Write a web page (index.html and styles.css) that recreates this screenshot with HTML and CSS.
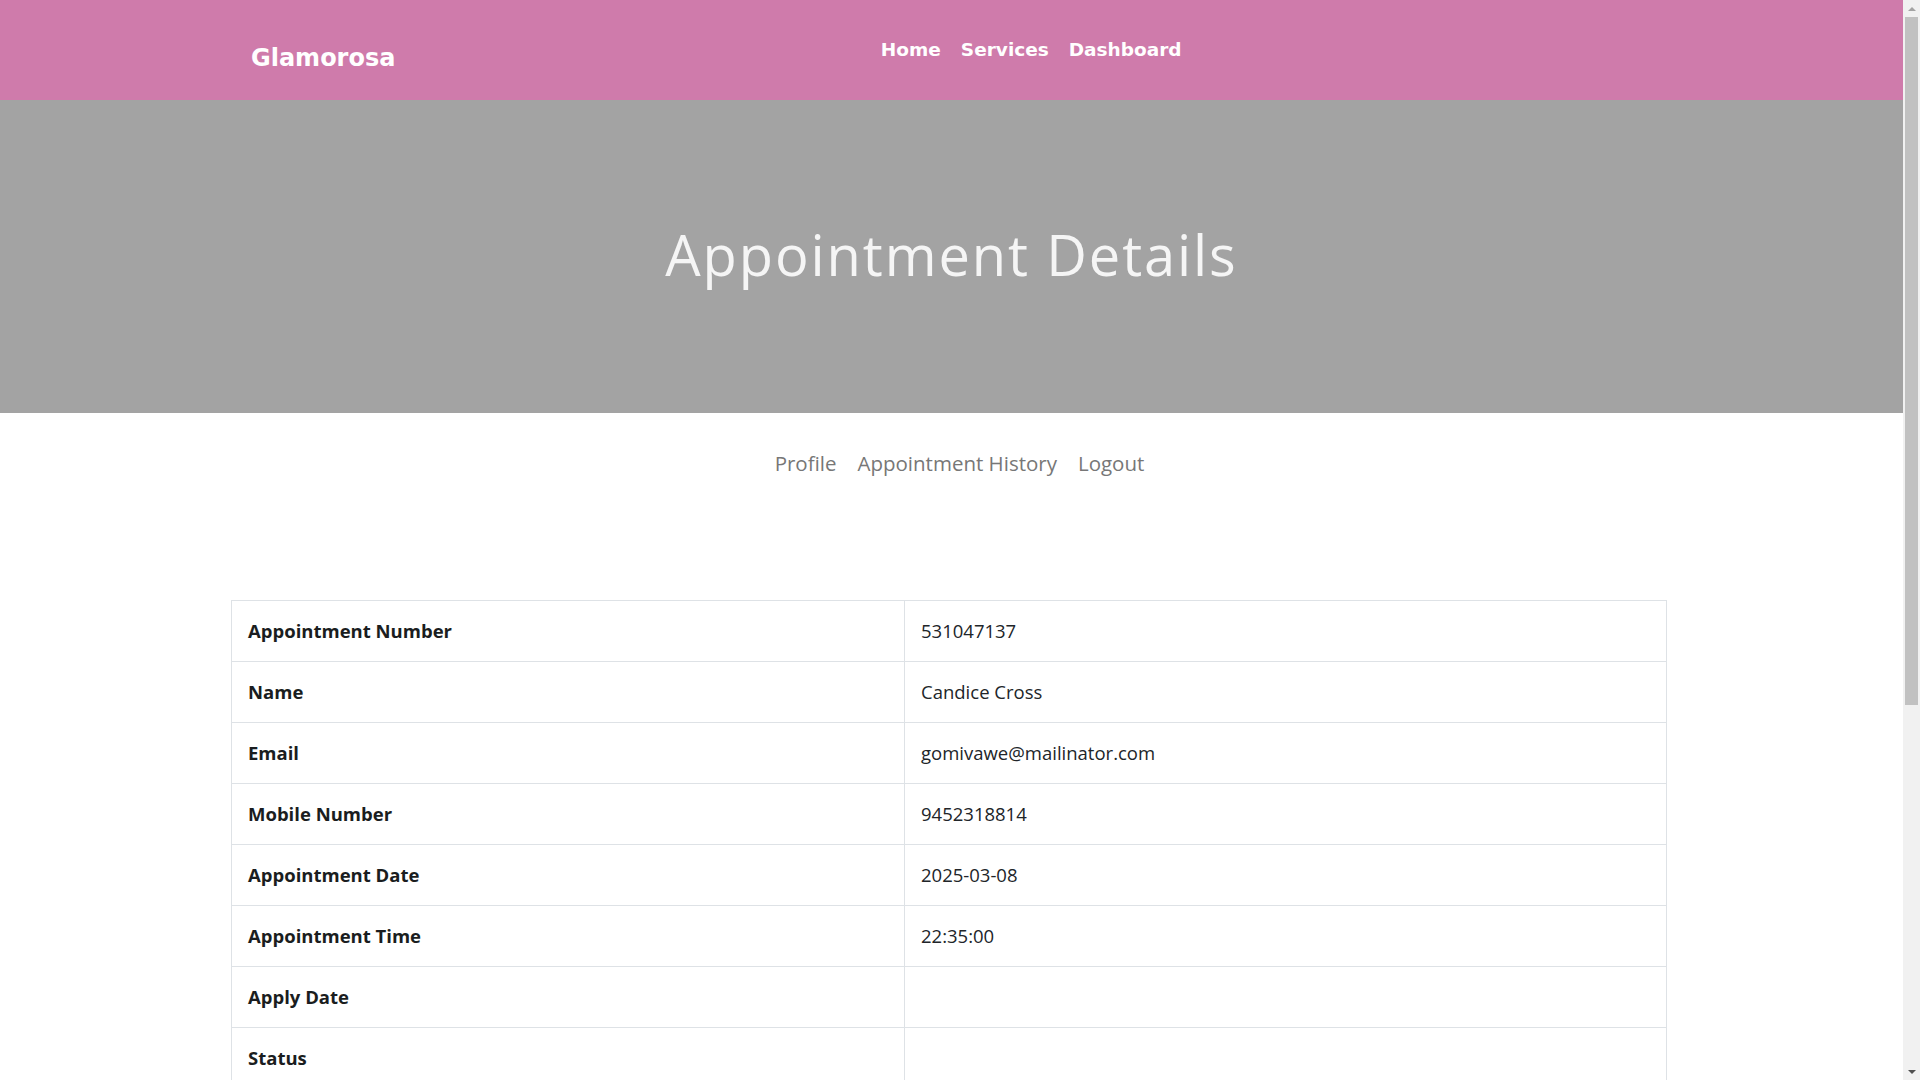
FILE: index.html
```html
<!DOCTYPE html>
<html lang="en">
<head>
<meta charset="utf-8">
<title>Glamorosa - Appointment Details</title>
<link rel="stylesheet" href="styles.css">
</head>
<body>
<header class="site-header">
  <div class="header-inner">
    <a class="brand" href="#">Glamorosa</a>
    <nav class="main-nav">
      <a href="#">Home</a>
      <a href="#">Services</a>
      <a href="#">Dashboard</a>
    </nav>
  </div>
</header>

<section class="hero">
  <h1 class="hero-title">Appointment Details</h1>
</section>

<nav class="sub-nav">
  <a href="#">Profile</a>
  <a href="#">Appointment History</a>
  <a href="#">Logout</a>
</nav>

<main class="content">
  <table class="details">
    <colgroup>
      <col class="col-label">
      <col class="col-value">
    </colgroup>
    <tbody>
      <tr><th>Appointment Number</th><td>531047137</td></tr>
      <tr><th>Name</th><td>Candice Cross</td></tr>
      <tr><th>Email</th><td>gomivawe@mailinator.com</td></tr>
      <tr><th>Mobile Number</th><td>9452318814</td></tr>
      <tr><th>Appointment Date</th><td>2025-03-08</td></tr>
      <tr><th>Appointment Time</th><td>22:35:00</td></tr>
      <tr><th>Apply Date</th><td></td></tr>
      <tr><th>Status</th><td></td></tr>
      <tr><th>Admin Remark</th><td></td></tr>
    </tbody>
  </table>
</main>

<footer class="site-footer">
  <p>Glamorosa Beauty Parlour</p>
</footer>

<div class="scrollbar" aria-hidden="true">
  <div class="sb-arrow sb-up"></div>
  <div class="sb-track">
    <div class="sb-thumb"></div>
  </div>
  <div class="sb-arrow sb-down"></div>
</div>
</body>
</html>
```

FILE: styles.css
```css
* { box-sizing: border-box; }

html, body {
  margin: 0;
  padding: 0;
}

body {
  font-family: "Open Sans", "Noto Sans", sans-serif;
  color: #212529;
  background: #ffffff;
  padding-right: 17px;
}

a { text-decoration: none; }

/* Header */
.site-header {
  background: #cf7bab;
  height: 100px;
  padding-right: 5px;
}

.header-inner {
  width: 1436px;
  margin: 0 auto;
  height: 100px;
  padding: 0 0 0 20px;
  display: flex;
  align-items: flex-start;
}

.brand {
  font-family: "DejaVu Sans", sans-serif;
  font-weight: 700;
  font-size: 24px;
  line-height: 24px;
  color: #ffffff;
  margin-top: 46px;
}

.main-nav {
  margin: 41px auto 0 auto;
  display: flex;
}

.main-nav a {
  font-family: "DejaVu Sans", sans-serif;
  font-weight: 700;
  font-size: 18.5px;
  line-height: 18.5px;
  color: #ffffff;
  padding: 0 10px;
}

/* Hero */
.hero {
  background: #a3a3a3;
  height: 313px;
  display: flex;
  align-items: center;
  justify-content: center;
  padding-bottom: 6px;
}

.hero-title {
  margin: 0;
  font-family: "Open Sans", sans-serif;
  font-weight: 400;
  font-size: 56px;
  line-height: 1;
  letter-spacing: 1.9px;
  color: #f5f5f5;
}

/* Sub navigation */
.sub-nav {
  display: flex;
  justify-content: center;
  gap: 21px;
  padding: 36px 0 0 16px;
  height: 187px;
}

.sub-nav a {
  font-family: "Open Sans", sans-serif;
  font-size: 20.5px;
  line-height: 28px;
  color: #777777;
  height: 28px;
}

/* Table */
.content {
  padding: 0 5px 430px 0;
}

.details {
  width: 1436px;
  margin: 0 auto;
  border-collapse: collapse;
  table-layout: fixed;
  font-size: 18.5px;
  line-height: 28px;
}

.col-label { width: 673px; }

.details th,
.details td {
  border: 1px solid #dee2e6;
  padding: 16px 16px;
  text-align: left;
  vertical-align: top;
}

.details th {
  font-weight: 700;
  color: #1a1d20;
}

.details td {
  font-weight: 400;
  color: #212529;
}

.site-footer {
  background: #cf7bab;
  color: #ffffff;
  text-align: center;
  padding: 20px 0;
}

.site-footer p { margin: 0; }

/* Window scrollbar (overlay at the right edge of the viewport) */
.scrollbar {
  position: fixed;
  top: 0;
  right: 0;
  width: 17px;
  height: 100vh;
  background: #f1f1f1;
  display: flex;
  flex-direction: column;
}

.sb-arrow {
  height: 17px;
  flex: none;
  display: flex;
  align-items: center;
  justify-content: center;
}

.sb-arrow::before {
  content: "";
  width: 0;
  height: 0;
  border-left: 4px solid transparent;
  border-right: 4px solid transparent;
}

.sb-up::before {
  border-bottom: 4px solid #a3a3a3;
}

.sb-down::before {
  border-top: 4px solid #505050;
}

.sb-track {
  flex: 1;
  padding: 0 2px;
}

.sb-thumb {
  height: 688px;
  background: #c1c1c1;
}
```
